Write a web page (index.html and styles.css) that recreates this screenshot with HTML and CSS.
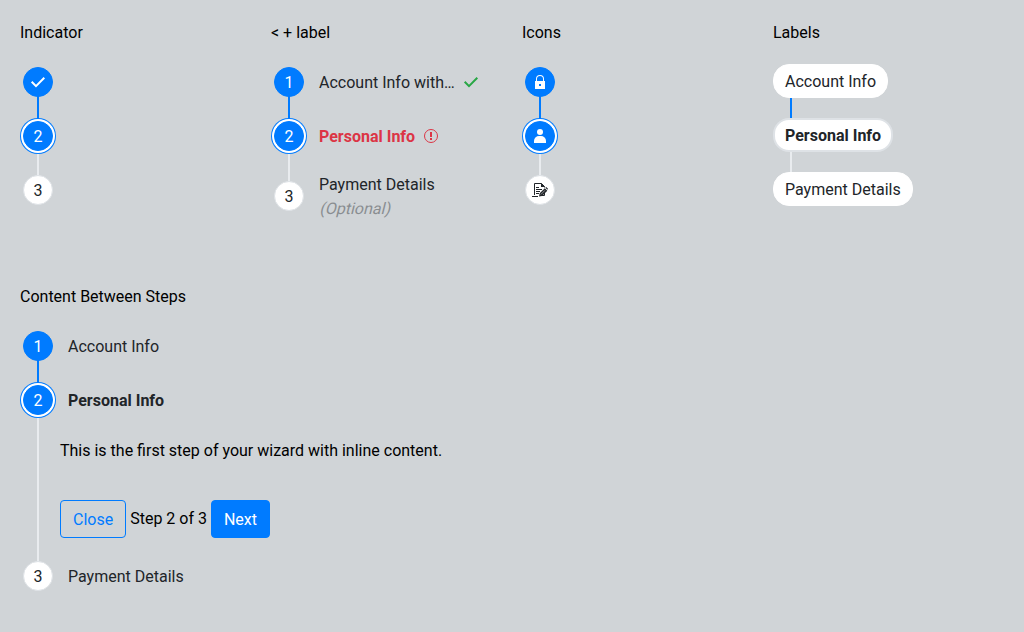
FILE: index.html
```
<!DOCTYPE html>
<html lang="en">
<head>
<meta charset="utf-8">
<title>Vertical steppers</title>
<link rel="stylesheet" href="styles.css">
</head>
<body>
<main class="page">
  <div class="examples">
    <section class="example">
      <h2 class="title">Indicator</h2>
      <ol class="stepper">
        <li class="step done"><span class="dot glyph"><svg class="icon" viewBox="0 0 16 16"><path d="M1.700 7.800l4.300 4.300 8.300-8.300" fill="none" stroke="currentColor" stroke-width="2"/></svg></span></li>
        <li class="step current"><span class="dot">2</span></li>
        <li class="step"><span class="dot">3</span></li>
      </ol>
    </section>
    <section class="example">
      <h2 class="title">&lt; + label</h2>
      <ol class="stepper">
        <li class="step done"><span class="dot">1</span><span class="label"><span class="text fixed">Account Info with…</span><svg class="icon valid" viewBox="0 0 16 16"><path d="M1.700 7.800l4.300 4.300 8.300-8.300" fill="none" stroke="currentColor" stroke-width="2"/></svg></span></li>
        <li class="step current error"><span class="dot">2</span><span class="label"><span class="text">Personal Info</span><svg class="icon invalid" viewBox="0 0 16 16"><circle cx="8" cy="8" r="6.5" fill="none" stroke="currentColor"/><path d="M7 4h2v5H7zM7 10h2v2H7z" fill="currentColor"/></svg></span></li>
        <li class="step"><span class="dot">3</span><span class="label stacked"><span>Payment Details</span><span class="optional">(Optional)</span></span></li>
      </ol>
    </section>
    <section class="example">
      <h2 class="title">Icons</h2>
      <ol class="stepper">
        <li class="step done"><span class="dot glyph"><svg class="icon" viewBox="0 0 16 16"><path fill="currentColor" fill-rule="evenodd" d="M12 7V5a4 4 0 0 0-8 0v2H3v8h10V7zM5 5a3 3 0 0 1 6 0v2H5zM7 10h2v2H7z"/></svg></span></li>
        <li class="step current"><span class="dot glyph"><svg class="icon" viewBox="0 0 16 16"><circle cx="8" cy="4" r="3" fill="currentColor"/><path fill="currentColor" d="M2 15v-2a5 5 0 0 1 5-5h2a5 5 0 0 1 5 5v2z"/></svg></span></li>
        <li class="step"><span class="dot glyph"><svg class="icon" viewBox="0 0 16 16"><path fill="none" stroke="currentColor" d="M2.500 13V1.500h7l3 3v1M0 14.500h6M9.500 13.500h3V11"/><path fill="currentColor" d="M9 1v4h4zM4 5h3v1H4zM4 7h6v1H4zM4 9h4v1H4zM4 11h3v1H4zM7 14.500l.7-3.200 5.100-5.100 2.500 2.500L10 13.900z"/><path fill="currentColor" d="M13.400 5.700l.8-.7 1.800 1.800-.6.900z"/><path stroke="#fff" stroke-width=".5" d="M8.800 12.500l4.200-4.200"/></svg></span></li>
      </ol>
    </section>
    <section class="example">
      <h2 class="title">Labels</h2>
      <ol class="stepper pills">
        <li class="step done"><span class="pill">Account Info</span></li>
        <li class="step current"><span class="pill">Personal Info</span></li>
        <li class="step"><span class="pill">Payment Details</span></li>
      </ol>
    </section>
  </div>
  <section class="example">
    <h2 class="title">Content Between Steps</h2>
    <ol class="stepper">
      <li class="step done"><span class="dot">1</span><span class="label"><span class="text">Account Info</span></span></li>
      <li class="step current expanded">
        <div class="step-head"><span class="dot">2</span><span class="label"><span class="text">Personal Info</span></span></div>
        <div class="content">
          <p class="message">This is the first step of your wizard with inline content.</p>
          <div class="actions"><button class="button outline">Close</button><span class="progress">Step 2 of 3</span><button class="button primary">Next</button></div>
        </div>
      </li>
      <li class="step"><span class="dot">3</span><span class="label"><span class="text">Payment Details</span></span></li>
    </ol>
  </section>
</main>
</body>
</html>
```
FILE: styles.css
```
* { box-sizing: border-box; }
body {
  margin: 0;
  background: #d0d4d7;
  color: #000;
  font: 16px/24px Roboto, sans-serif;
}
.page {
  height: 632px;
  padding: 21px 0 0 20px;
}
.examples {
  display: grid;
  grid-template-columns: repeat(4, 1fr);
  height: 264px;
}
.title {
  margin: 0 0 19px;
  font-size: 16px;
  font-weight: 400;
}
.stepper {
  display: flex;
  flex-direction: column;
  gap: 18px;
  margin: 0;
  padding: 0;
  list-style: none;
  color: #212529;
}
.step {
  position: relative;
  display: flex;
  align-items: center;
  min-height: 36px;
}
.step-head { display: flex; align-items: center; }
/* Connector running down to the following step */
.step:not(:last-child)::before {
  content: "";
  position: absolute;
  left: 17px;
  top: 50%;
  bottom: -30px;
  width: 2px;
  background: #e9ecef;
}
.step.done::before { background: #007bff !important; }
.step.expanded::before { top: 18px !important; }
.dot {
  position: relative;
  display: flex;
  flex: none;
  align-items: center;
  justify-content: center;
  width: 30px;
  height: 30px;
  margin: 3px;
  padding-top: 2px;
  border: 1px solid #dee2e6;
  border-radius: 50%;
  background: #fff;
}
.dot.glyph { padding-top: 0; }
.done .dot, .current .dot {
  border-color: #007bff;
  background: #007bff;
  color: #fff;
}
.current .dot { box-shadow: 0 0 0 2px #fff, 0 0 0 3px #007bff; }
.icon { display: block; flex: none; width: 16px; height: 16px; }
.label {
  display: flex;
  align-items: center;
  gap: 8px;
  margin-left: 12px;
}
.text { padding-top: 2px; }
.fixed { width: 136px; white-space: nowrap; }
.current .label, .current .pill { font-weight: 700; }
.error .label { color: #dc3545; }
.stacked {
  flex-direction: column;
  align-items: flex-start;
  gap: 0;
  height: 48px;
  padding-top: 1px;
}
.optional {
  opacity: .4;
  transform: skewX(-14deg);
  transform-origin: 0 18px;
}
.valid { color: #28a745; }
.pills { gap: 20px; }
.pills .step { min-height: 34px; }
.pill {
  position: relative;
  padding: 5px 11px 3px;
  border: 1px solid #fff;
  border-radius: 16px;
  background: #fff;
}
.current .pill {
  padding: 4px 10px 2px;
  border: 2px solid #dee2e6;
}
.expanded { display: block; }
.content {
  height: 122px;
  padding: 21px 0 0 40px;
  color: #000;
}
.message { margin: 0; }
.actions {
  display: flex;
  gap: 4px;
  margin-top: 37px;
}
.progress { line-height: 37px; }
.button {
  height: 38px;
  padding: 2px 12px 0;
  border: 1px solid #007bff;
  border-radius: 4px;
  font: inherit;
}
.outline { background: transparent; color: #007bff; }
.primary { background: #007bff; color: #fff; }
```
